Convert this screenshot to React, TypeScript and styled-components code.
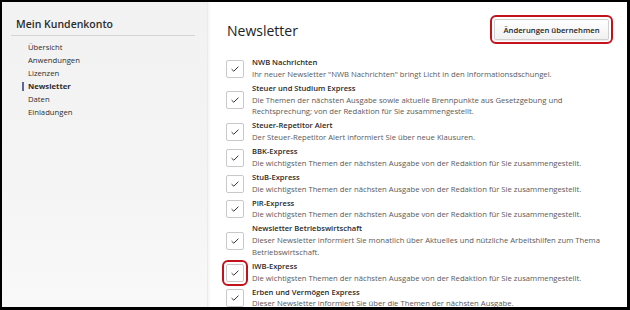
import React from "react";
import styled, { createGlobalStyle } from "styled-components";

const Global = createGlobalStyle`
  html, body { margin: 0; padding: 0; background: #000; }
  body { font-family: "Open Sans", "DejaVu Sans", sans-serif; }
  * { box-sizing: border-box; }
`;

const Frame = styled.div`
  width: 625px;
  height: 305px;
  margin: 2px 0 0 2px;
  display: flex;
  background: #fff;
  overflow: hidden;
`;

const Sidebar = styled.aside`
  width: 208px;
  flex: none;
  background: linear-gradient(#f2f2f2, #f4f4f4 60%, #f9f9f9);
  border-right: 2px solid #f7f7f7;
  box-shadow: inset -1px 0 0 #ebebeb;
`;

const SideHeader = styled.div`
  margin: 0 13px 0 9px;
  padding: 15px 0 4px 5px;
  border-bottom: 1px solid #d4d4d4;
`;

const SideTitle = styled.h2`
  margin: 0;
  font-size: 10.5px;
  line-height: 14px;
  font-weight: 600;
  color: #2b2b2b;
`;

const Nav = styled.ul`
  list-style: none;
  margin: 5px 0 0;
  padding: 0 0 0 26px;
`;

const NavItem = styled.li<{ $active?: boolean }>`
  position: relative;
  font-size: 7.7px;
  line-height: 13.1px;
  color: #2e2e2e;
  font-weight: ${(p) => (p.$active ? 700 : 400)};
  &::before {
    content: "";
    display: ${(p) => (p.$active ? "block" : "none")};
    position: absolute;
    left: -6px;
    top: 2px;
    width: 2px;
    height: 9px;
    background: #5b6899;
  }
`;

const Main = styled.main`
  flex: 1;
  padding: 16px 18px 0 17px;
  min-width: 0;
`;

const HeaderRow = styled.div`
  display: flex;
  justify-content: space-between;
  align-items: center;
`;

const PageTitle = styled.h1`
  margin: 0;
  padding-top: 2px;
  font-size: 14px;
  line-height: 21px;
  font-weight: 400;
  color: #222;
`;

const Button = styled.button`
  width: 115px;
  height: 21px;
  padding: 0;
  font-family: inherit;
  font-size: 7.7px;
  font-weight: 600;
  color: #1e1e1e;
  background: linear-gradient(#ffffff, #f1f1f1);
  border: 1px solid #cfcfcf;
  border-radius: 2px;
  box-shadow: 0 1px 1px rgba(0, 0, 0, 0.08);
  outline: 2px solid #c4121d;
  outline-offset: 2px;
`;

const List = styled.div`
  margin-top: 16px;
  display: flex;
  flex-direction: column;
  gap: 2.4px;
`;

const Row = styled.label`
  display: flex;
  align-items: center;
  gap: 8px;
`;

const Box = styled.span<{ $marked?: boolean }>`
  flex: none;
  width: 18px;
  height: 18px;
  margin-left: -1px;
  border: 1px solid #c9c9c9;
  border-radius: 2px;
  background: #fff;
  display: flex;
  align-items: center;
  justify-content: center;
  outline: ${(p) => (p.$marked ? "2px solid #c4121d" : "none")};
  outline-offset: 2px;
`;

const Text = styled.div`
  max-width: 362px;
  font-size: 7.7px;
  line-height: 11.7px;
  color: #5a5a5a;
`;

const ItemTitle = styled.div`
  font-weight: 600;
  font-size: 7.6px;
  color: #2a2a2a;
`;

const Check = () => (
  <svg width="8" height="6" viewBox="0 0 8 6" fill="none">
    <path d="M0.6 3.2 L2.8 5.2 L7.4 0.7" stroke="#333" strokeWidth="1" />
  </svg>
);

const items = [
  { t: "NWB Nachrichten", d: "Ihr neuer Newsletter \"NWB Nachrichten\" bringt Licht in den Informationsdschungel." },
  { t: "Steuer und Studium Express", d: "Die Themen der nächsten Ausgabe sowie aktuelle Brennpunkte aus Gesetzgebung und Rechtsprechung; von der Redaktion für Sie zusammengestellt." },
  { t: "Steuer-Repetitor Alert", d: "Der Steuer-Repetitor Alert informiert Sie über neue Klausuren." },
  { t: "BBK-Express", d: "Die wichtigsten Themen der nächsten Ausgabe von der Redaktion für Sie zusammengestellt." },
  { t: "StuB-Express", d: "Die wichtigsten Themen der nächsten Ausgabe von der Redaktion für Sie zusammengestellt." },
  { t: "PiR-Express", d: "Die wichtigsten Themen der nächsten Ausgabe von der Redaktion für Sie zusammengestellt." },
  { t: "Newsletter Betriebswirtschaft", d: "Dieser Newsletter informiert Sie monatlich über Aktuelles und nützliche Arbeitshilfen zum Thema Betriebswirtschaft." },
  { t: "IWB-Express", d: "Die wichtigsten Themen der nächsten Ausgabe von der Redaktion für Sie zusammengestellt.", marked: true },
  { t: "Erben und Vermögen Express", d: "Dieser Newsletter informiert Sie über die Themen der nächsten Ausgabe." },
];

const nav = ["Übersicht", "Anwendungen", "Lizenzen", "Newsletter", "Daten", "Einladungen"];

export default function App() {
  return (
    <>
      <Global />
      <Frame>
        <Sidebar>
          <SideHeader>
            <SideTitle>Mein Kundenkonto</SideTitle>
          </SideHeader>
          <Nav>
            {nav.map((n) => (
              <NavItem key={n} $active={n === "Newsletter"}>
                {n}
              </NavItem>
            ))}
          </Nav>
        </Sidebar>
        <Main>
          <HeaderRow>
            <PageTitle>Newsletter</PageTitle>
            <Button>Änderungen übernehmen</Button>
          </HeaderRow>
          <List>
            {items.map((it) => (
              <Row key={it.t}>
                <Box $marked={it.marked}>
                  <Check />
                </Box>
                <Text>
                  <ItemTitle>{it.t}</ItemTitle>
                  {it.d}
                </Text>
              </Row>
            ))}
          </List>
        </Main>
      </Frame>
    </>
  );
}
